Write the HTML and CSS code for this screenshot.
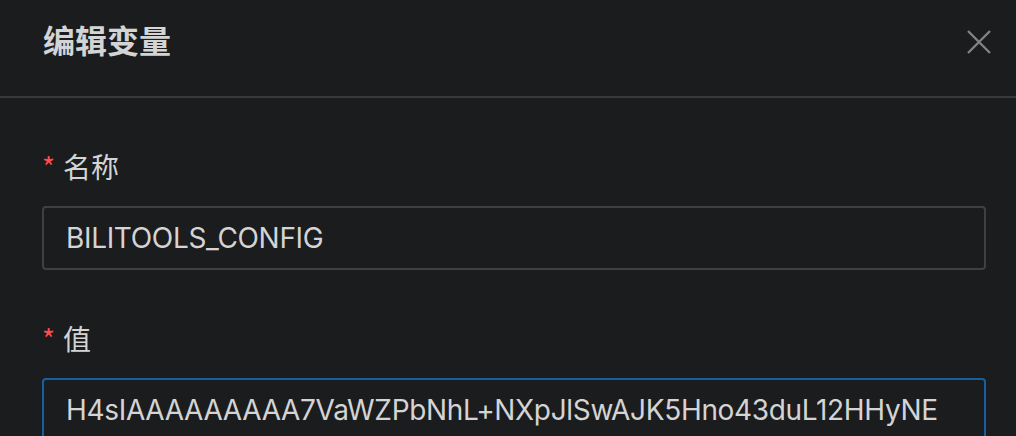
FILE: index.html
```html
<!DOCTYPE html>
<html lang="zh-CN">
<head>
    <meta charset="UTF-8">
    <meta name="viewport" content="width=device-width, initial-scale=1.0">
    <title>编辑变量</title>
    <link rel="stylesheet" href="styles.css">
</head>
<body>
    <div class="modal">
        <div class="modal-header">
            <div class="modal-title">编辑变量</div>
            <button class="modal-close" aria-label="Close">
                <svg width="24" height="24" viewBox="0 0 24 24">
                    <path d="M1 1 L23 23 M23 1 L1 23" stroke="currentColor" stroke-width="2.4" fill="none"/>
                </svg>
            </button>
        </div>

        <form class="modal-body">
            <div class="form-item">
                <label class="form-label required" for="name">名称</label>
                <input class="form-input" id="name" type="text" value="BILITOOLS_CONFIG">
            </div>
            <div class="form-item">
                <label class="form-label required" for="value">值</label>
                <input class="form-input focused" id="value" type="text" value="H4sIAAAAAAAAA7VaWZPbNhL+NXpJlSwAJK5Hno43duL12HHyNE">
            </div>
        </form>
    </div>
</body>
</html>
```

FILE: styles.css
```css
* {
    margin: 0;
    padding: 0;
    box-sizing: border-box;
}

body {
    font-family: Inter, "Noto Sans CJK SC", sans-serif;
    background: #1b1c1e;
    color: rgba(255, 255, 255, 0.85);
    overflow: hidden;
}

.modal {
    width: 1016px;
}

.modal-header {
    display: flex;
    align-items: center;
    justify-content: space-between;
    height: 98px;
    padding: 0 25px 12px 43px;
    border-bottom: 2px solid #373a3a;
}

.modal-title {
    font-size: 32px;
    font-weight: 700;
    line-height: 44px;
    color: rgba(255, 255, 255, 0.82);
}

.modal-close {
    background: none;
    border: none;
    color: rgba(255, 255, 255, 0.45);
    cursor: pointer;
    display: flex;
}

.modal-body {
    padding: 46px 30px 0 42px;
}

.form-item {
    margin-bottom: 46px;
}

.form-label {
    display: block;
    font-size: 28px;
    line-height: 44px;
    padding-bottom: 16px;
    color: rgba(255, 255, 255, 0.82);
}

.form-label.required::before {
    content: "*";
    display: inline-block;
    margin-right: 8px;
    color: #ff4d4f;
    font-family: SimSun, "Noto Sans CJK SC", sans-serif;
    font-size: 28px;
}

.form-input {
    display: block;
    width: 944px;
    height: 64px;
    padding: 0 22px;
    font-family: Inter, "Noto Sans CJK SC", sans-serif;
    font-size: 28px;
    letter-spacing: -0.33px;
    color: rgba(255, 255, 255, 0.82);
    background: transparent;
    border: 2px solid #3d4141;
    border-radius: 4px;
    outline: none;
}

.form-input.focused {
    border-color: #165fa3;
}
```
